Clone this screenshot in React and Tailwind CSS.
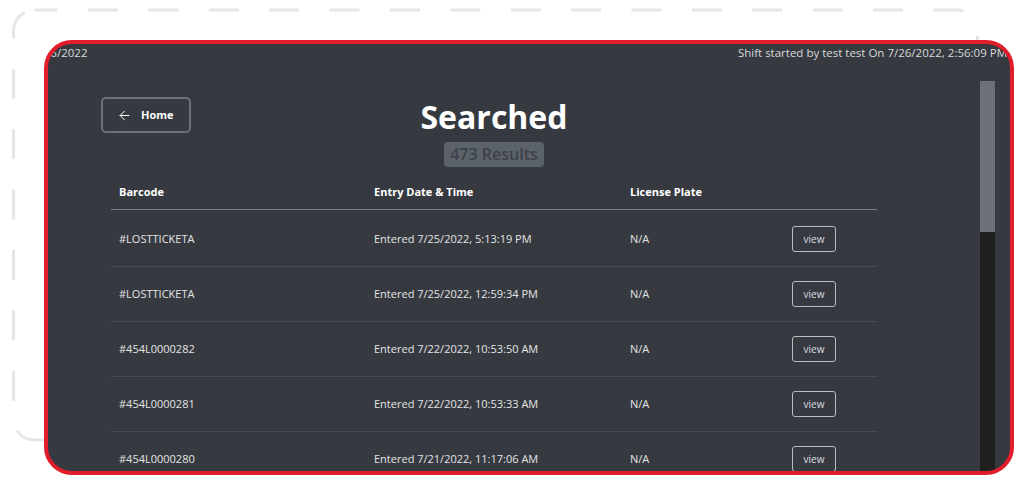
import { ArrowLeft } from 'lucide-react';

const rows = [
  { barcode: '#LOSTTICKETA', entered: 'Entered 7/25/2022, 5:13:19 PM', plate: 'N/A' },
  { barcode: '#LOSTTICKETA', entered: 'Entered 7/25/2022, 12:59:34 PM', plate: 'N/A' },
  { barcode: '#454L0000282', entered: 'Entered 7/22/2022, 10:53:50 AM', plate: 'N/A' },
  { barcode: '#454L0000281', entered: 'Entered 7/22/2022, 10:53:33 AM', plate: 'N/A' },
  { barcode: '#454L0000280', entered: 'Entered 7/21/2022, 11:17:06 AM', plate: 'N/A' },
];

export default function App() {
  return (
    <div className="relative w-[1024px] h-[484px] bg-white overflow-hidden font-['Open_Sans',sans-serif] pt-[40px] pl-[44px]">
      {/* dashed outline behind the card */}
      <svg className="absolute inset-0" width="1024" height="484" viewBox="0 0 1024 484">
        <rect
          x="13.5"
          y="10"
          width="964"
          height="430"
          rx="21"
          fill="none"
          stroke="#e3e6ea"
          strokeWidth="3"
          strokeDasharray="30 30.4"
          strokeDashoffset="7"
        />
      </svg>

      {/* Card */}
      <div className="relative w-[970px] h-[435px] rounded-[28px] border-[4px] border-[#e11d2c] bg-[#363a40] overflow-hidden flex flex-col">
        {/* Top bar */}
        <div className="h-[37px] shrink-0 flex justify-between pt-[2px] pr-[3px] text-[11.5px] leading-[14px] text-[#d8d9db]">
          <span className="-ml-[15px]">7/26/2022</span>
          <span>Shift started by test test On 7/26/2022, 2:56:09 PM</span>
        </div>

        {/* Body */}
        <div className="flex flex-1 min-h-0">
          <main className="flex-1 pl-[53px] pt-[16px]">
            <div className="w-[786px]">
              {/* Header */}
              <div className="grid grid-cols-[1fr_auto_1fr] items-start">
                <button className="w-[90px] h-[36px] flex items-center gap-[9px] pl-[14px] rounded-[5px] border-2 border-[#6c7178] text-white text-[11px] font-bold">
                  <ArrowLeft size={15} strokeWidth={1.6} />
                  Home
                </button>
                <div className="flex flex-col items-center">
                  <h1 className="text-[32px] leading-[40px] font-bold text-white">Searched</h1>
                  <span className="mt-[5px] h-[25px] px-[6px] rounded-[4px] bg-[#5c6269] text-[#3c4147] text-[16px] leading-[25px] font-semibold">
                    473 Results
                  </span>
                </div>
                <div />
              </div>

              {/* Table */}
              <div className="mx-[10px] mt-[8px]">
                <div className="grid grid-cols-[255px_256px_162px_1fr] h-[35px] items-center border-b-[1.5px] border-[#7b7f85] text-white text-[11px] font-bold">
                  <div className="px-[8px]">Barcode</div>
                  <div className="px-[8px]">Entry Date &amp; Time</div>
                  <div className="px-[8px]">License Plate</div>
                  <div />
                </div>
                <div className="pt-[2px]">
                  {rows.map((r, i) => (
                    <div
                      key={i}
                      className="grid grid-cols-[255px_256px_162px_1fr] h-[55px] items-center border-b border-[#474c53] text-[#e3e4e6] text-[11px]"
                    >
                      <div className="px-[8px]">{r.barcode}</div>
                      <div className="px-[8px]">{r.entered}</div>
                      <div className="px-[8px]">{r.plate}</div>
                      <div className="px-[8px]">
                        <button className="w-[44px] h-[26px] rounded-[3px] border-[1.5px] border-[#b9bbbe] text-[#dcdde0] text-[10px]">
                          view
                        </button>
                      </div>
                    </div>
                  ))}
                </div>
              </div>
            </div>
          </main>

          {/* Scrollbar */}
          <div className="w-[15px] mr-[15px] flex flex-col">
            <div className="h-[151px] bg-[#6c7178]" />
            <div className="flex-1 bg-[#1f1f20]" />
          </div>
        </div>
      </div>
    </div>
  );
}
